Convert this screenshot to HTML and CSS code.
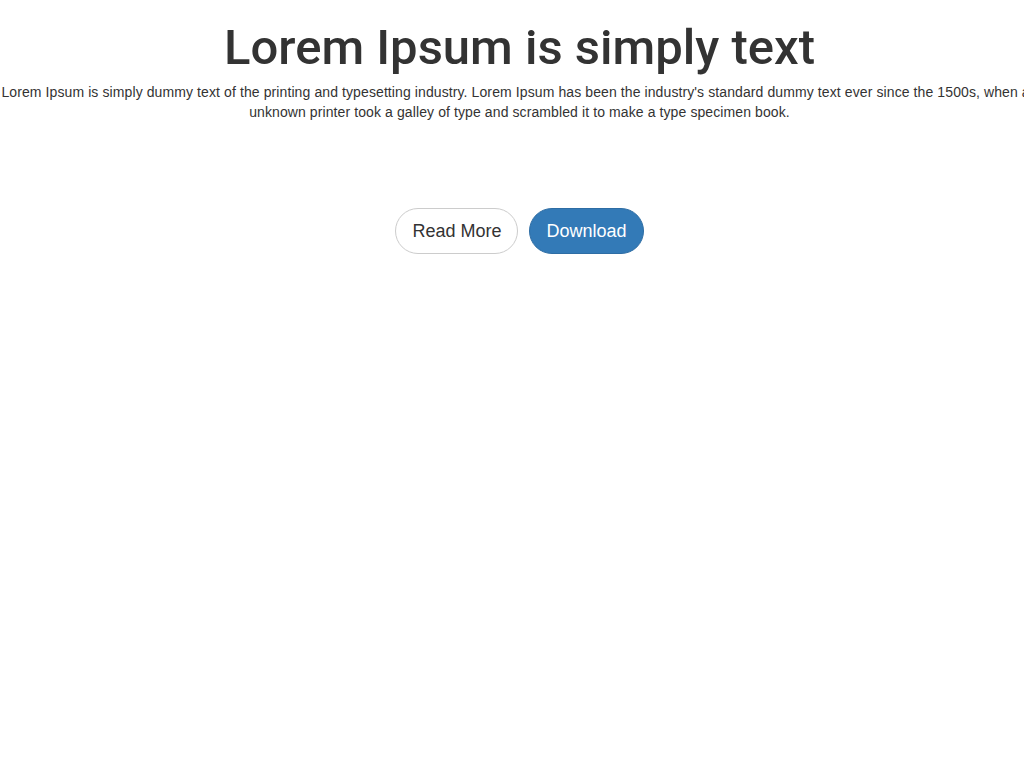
FILE: index.html
```html
<!DOCTYPE html>
<html>
<head>
<meta charset="utf-8">
<link rel="stylesheet" href="styles.css">
</head>
<body>
<div class="hero">
  <h1 class="title">Lorem Ipsum is simply text</h1>
  <p class="lead">Lorem Ipsum is simply dummy text of the printing and typesetting industry. Lorem Ipsum has been the industry's standard dummy text ever since the 1500s, when an unknown printer took a galley of type and scrambled it to make a type specimen book.</p>
  <div class="actions">
    <a class="btn btn-default">Read More</a>
    <a class="btn btn-primary">Download</a>
  </div>
</div>
</body>
</html>
```
FILE: styles.css
```css
html, body {
  margin: 0;
  padding: 0;
  overflow: hidden;
  background: #fff;
}
body {
  font-family: "Liberation Sans", Arial, sans-serif;
  color: #333;
  font-size: 14px;
  line-height: 20px;
}
.hero {
  width: 1039px;
  text-align: center;
}
.title {
  margin: 20px 0 0;
  font-family: Roboto, "Liberation Sans", sans-serif;
  font-size: 49px;
  line-height: 56px;
  font-weight: 500;
  color: #333;
}
.lead {
  margin: 6px 0 0;
  font-size: 14px;
  line-height: 20px;
  letter-spacing: 0.1px;
}
.actions {
  margin-top: 86px;
  display: flex;
  justify-content: center;
  gap: 11px;
}
.btn {
  display: inline-block;
  padding: 10px 16px;
  font-size: 18px;
  line-height: 24px;
  border-radius: 24px;
  border: 1px solid #ccc;
  cursor: pointer;
}
.btn-default {
  background: #fff;
  color: #333;
}
.btn-primary {
  background: #337ab7;
  border-color: #2e6da4;
  color: #fff;
}
```
